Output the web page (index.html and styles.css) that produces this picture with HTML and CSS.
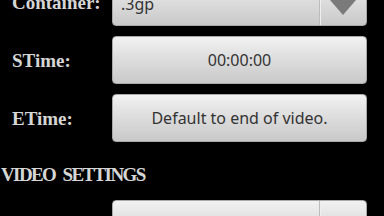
FILE: index.html
```html
<!DOCTYPE html>
<html lang="en">
<head>
    <meta charset="UTF-8">
    <meta name="viewport" content="width=device-width, initial-scale=1.0">
    <title>Convert</title>
    <link rel="stylesheet" href="styles.css">
</head>
<body>
    <div class="form">
        <div class="row">
            <div class="label">Container:</div>
            <div class="spinner">
                <span class="value">.3gp</span>
                <span class="arrow">
                    <svg width="26" height="16" viewBox="0 0 26 16"><polygon points="0,0 26,0 13,15" fill="#7a7a7a"/></svg>
                </span>
            </div>
        </div>
        <div class="row">
            <div class="label">STime:</div>
            <button class="btn">00:00:00</button>
        </div>
        <div class="row">
            <div class="label">ETime:</div>
            <button class="btn">Default to end of video.</button>
        </div>
        <div class="section">VIDEO SETTINGS</div>
        <div class="row">
            <div class="label"></div>
            <div class="spinner">
                <span class="value"></span>
                <span class="arrow"></span>
            </div>
        </div>
    </div>
</body>
</html>
```

FILE: styles.css
```css
html, body {
    margin: 0;
    background: #000;
    width: 384px;
    height: 216px;
    overflow: hidden;
}
.form {
    display: flex;
    flex-direction: column;
    gap: 10px;
    margin-top: -22px;
}
.row {
    display: flex;
    align-items: center;
    height: 48px;
}
.label {
    width: 100px;
    padding-left: 12px;
    padding-top: 2px;
    font-family: "Liberation Serif", serif;
    font-weight: bold;
    font-size: 19px;
    color: #d6d6d6;
}
.btn, .spinner {
    width: 255px;
    height: 48px;
    box-sizing: border-box;
    border: 1px solid #a9a9a9;
    border-radius: 4px;
    background: linear-gradient(#f2f2f2, #dcdcdc 50%, #c9c9c9);
    font-family: "Noto Sans", sans-serif;
    font-size: 16px;
    color: #333;
}
.btn {
    padding: 0;
}
.spinner {
    display: flex;
    align-items: stretch;
}
.spinner .value {
    flex: 1;
    display: flex;
    align-items: center;
    padding-left: 8px;
    padding-top: 4px;
}
.spinner .arrow {
    width: 46px;
    display: flex;
    align-items: center;
    justify-content: center;
    padding-top: 12px;
    border-left: 1px solid #bcbcbc;
    box-shadow: inset 1px 0 #efefef;
}
.section {
    height: 38px;
    display: flex;
    align-items: center;
    padding-top: 7px;
    box-sizing: border-box;
    padding-left: 1px;
    font-family: "Liberation Serif", serif;
    font-weight: bold;
    font-size: 19px;
    letter-spacing: -1.6px;
    word-spacing: 4px;
    color: #d6d6d6;
}
```
